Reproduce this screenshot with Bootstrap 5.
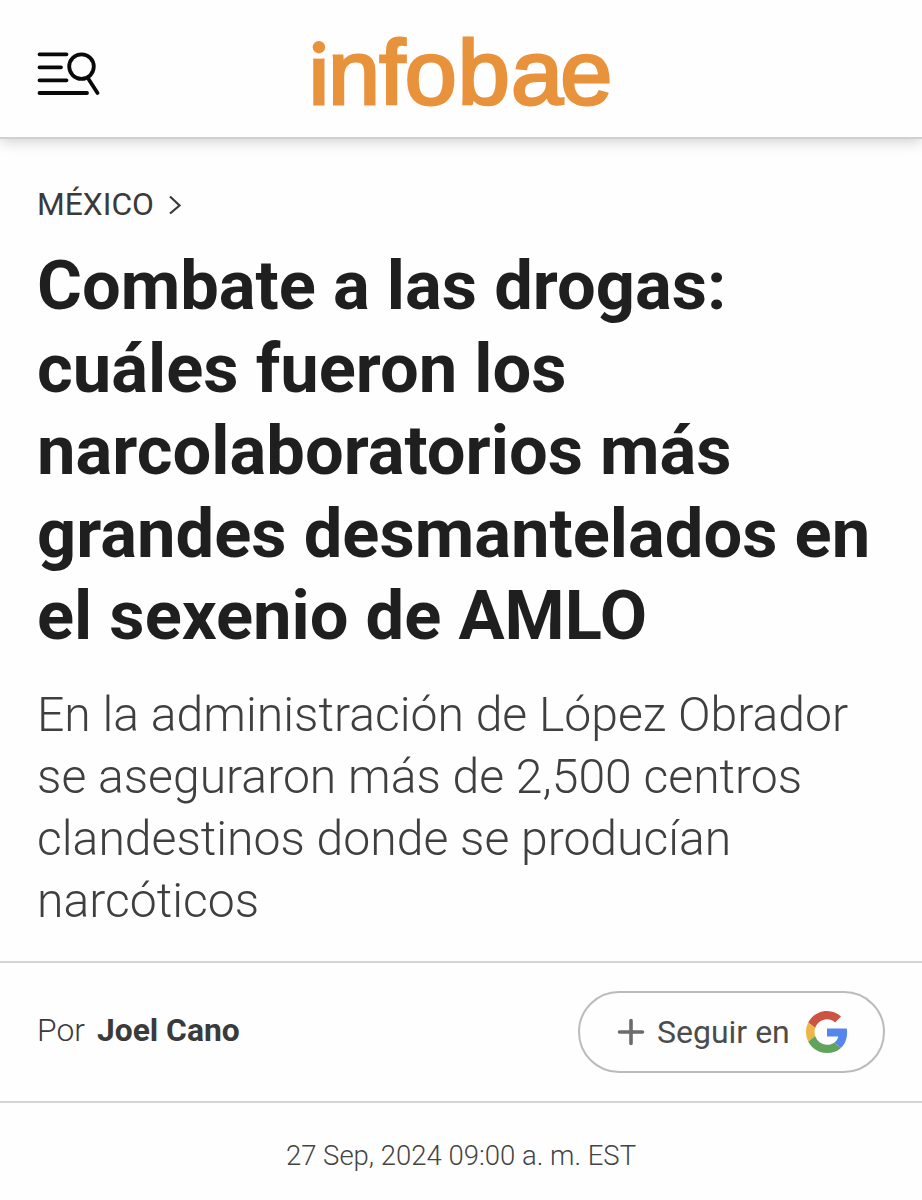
<!DOCTYPE html>
<html lang="es">
<head>
<meta charset="utf-8">
<meta name="viewport" content="width=device-width, initial-scale=1">
<title>Combate a las drogas - infobae</title>
<link href="https://cdn.jsdelivr.net/npm/bootstrap@5.3.0/dist/css/bootstrap.min.css" rel="stylesheet">
<style>
body{font-family:Roboto,"Liberation Sans",sans-serif;background:#fefefe;color:#3a3a3a;overflow:hidden}
svg{display:block;flex:none}
.masthead{height:139px;background:#fefefe;border-bottom:2px solid #d0d0d0;box-shadow:0 2px 14px rgba(0,0,0,.2)}
.brand-mark text{font-family:"Liberation Sans",sans-serif;font-size:90px;fill:#e8923c;stroke:#e8923c;stroke-width:2.8px}
.gutter{padding-left:37px;padding-right:37px}
.section-link{font-size:31.8px;line-height:40px;margin-top:45px;color:#3a3a3a;gap:15px}
.headline{font-size:68.7px;line-height:82.5px;font-weight:700;color:#1f1f1f;margin:21px 0 0;white-space:nowrap}
.deck{font-size:48.1px;line-height:62px;font-weight:300;color:#3f3f3f;margin:26px 0 0;white-space:nowrap}
.byline{height:142px;margin-top:29px;border-top:2px solid #d4d4d4;border-bottom:2px solid #d4d4d4;font-size:31.8px}
.credit{margin-top:-2px}
.author{font-weight:700}
.follow{width:307px;height:82px;border:2px solid #bbb;font-size:32px;color:#4c4c4c;background:#fefefe;padding:0 0 0 37px}
.stamp{font-size:27.5px;line-height:40px;font-weight:300;color:#444;margin-top:33px}
</style>
</head>
<body>
<header class="masthead position-relative d-flex justify-content-center">
  <button class="btn p-0 border-0 position-absolute" style="left:37px;top:50px" aria-label="Menú">
    <svg width="64" height="48" viewBox="0 0 64 48" fill="none" stroke="#090909" stroke-width="3.8" stroke-linecap="round"><path d="M2.500 4.300H29.500M2.500 17.300H24M2.500 30.300H29.500M2.500 43H50M51.500 29L60.500 43"/><circle cx="44.500" cy="16.600" r="12.300"/></svg>
  </button>
  <svg class="brand-mark" width="320" height="137" viewBox="301 0 320 137">
    <text transform="translate(309 104) scale(1.04 1)" x="-0.6 18.3 67.5 92 143 194.3 241.6" y="0">infobae</text>
    <path d="M309 34H329V57.500Q319 60 309 57.500Z" fill="#fefefe"/>
    <circle cx="318.900" cy="47.200" r="6.200" fill="#e8923c"/>
  </svg>
</header>
<main>
  <div class="gutter">
    <div class="section-link d-flex align-items-center"><span>MÉXICO</span>
      <svg width="13" height="20" viewBox="0 0 13 20" fill="none" stroke="#3a3a3a" stroke-width="2.200"><path d="M1 2.500L10.500 11.500L1 19.500"/></svg>
    </div>
    <h1 class="headline"><span>Combate a las drogas:</span><br><span>cuáles fueron los</span><br><span>narcolaboratorios más</span><br><span>grandes desmantelados en</span><br><span>el sexenio de AMLO</span></h1>
    <h2 class="deck">En la administración de López Obrador<br>se aseguraron más de 2,500 centros<br>clandestinos donde se producían<br>narcóticos</h2>
  </div>
  <div class="byline gutter d-flex align-items-center justify-content-between">
    <div class="credit"><span class="fw-light">Por</span><span class="author ms-2 ps-1">Joel Cano</span></div>
    <button class="btn follow rounded-pill d-flex align-items-center">
      <svg width="28" height="28" viewBox="0 0 28 28" stroke="#6c6c6c" stroke-width="3.600" stroke-linecap="round"><path d="M2.500 14H25.500M14 2.500V25.500"/></svg>
      <span class="ms-2 ps-1">Seguir en</span>
      <svg class="ms-3" width="42" height="42" viewBox="0 0 48 48"><path fill="#cc5443" d="M24 9.500c3.540 0 6.710 1.220 9.210 3.600l6.850-6.850C35.900 2.380 30.470 0 24 0 14.620 0 6.510 5.380 2.560 13.220l7.980 6.190C12.430 13.720 17.740 9.500 24 9.500z"/><path fill="#5686eb" d="M46.980 24.550c0-1.570-.15-3.090-.38-4.550H24v9.020h12.940c-.58 2.960-2.260 5.480-4.780 7.180l7.730 6c4.510-4.180 7.090-10.360 7.090-17.650z"/><path fill="#edb64b" d="M10.530 28.590c-.48-1.450-.76-2.990-.76-4.590s.27-3.140.76-4.590l-7.980-6.190C.92 16.460 0 20.120 0 24s.92 7.540 2.560 10.780l7.970-6.190z"/><path fill="#60a35d" d="M24 48c6.480 0 11.930-2.130 15.890-5.810l-7.730-6c-2.150 1.450-4.920 2.300-8.160 2.300-6.260 0-11.570-4.220-13.470-9.910l-7.980 6.190C6.510 42.620 14.620 48 24 48z"/></svg>
    </button>
  </div>
  <div class="stamp text-center">27 Sep, 2024 09:00 a. m. EST</div>
</main>
<script src="https://cdn.jsdelivr.net/npm/bootstrap@5.3.0/dist/js/bootstrap.bundle.min.js"></script>
</body>
</html>
